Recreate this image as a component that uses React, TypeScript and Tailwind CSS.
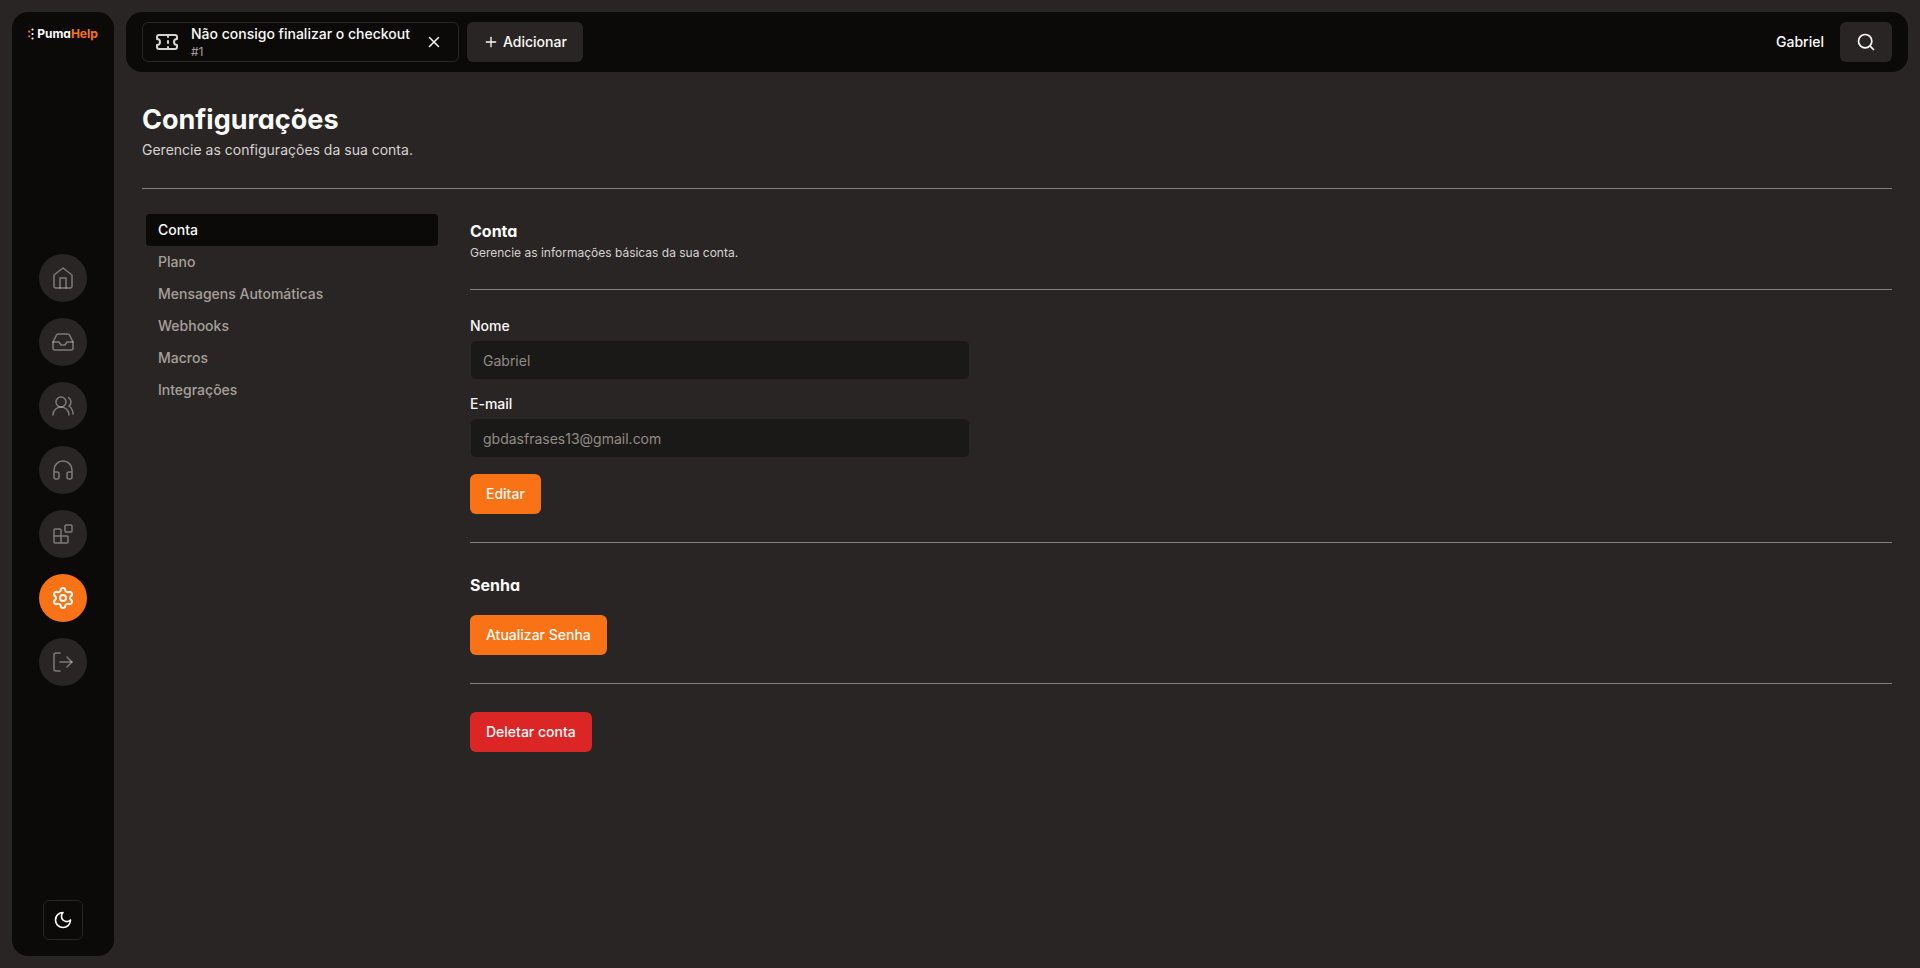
import React, { useState } from 'react';
import { Headphones, Inbox, LogOut, Plus, Search, Settings, Ticket, UsersRound, X } from 'lucide-react';

const HomeIcon = () => (
  <svg width="24" height="24" viewBox="0 0 24 24" fill="none" stroke="currentColor" strokeWidth="1.5" strokeLinecap="round" strokeLinejoin="round">
    <path d="m3 9 9-7 9 7v11a2 2 0 0 1-2 2H5a2 2 0 0 1-2-2z" />
    <polyline points="9 22 9 12 15 12 15 22" />
  </svg>
);

const BlocksIcon = () => (
  <svg width="24" height="24" viewBox="0 0 24 24" fill="none" stroke="currentColor" strokeWidth="1.5" strokeLinecap="round" strokeLinejoin="round">
    <rect width="7" height="7" x="14" y="3" rx="1" />
    <path d="M10 21V8a1 1 0 0 0-1-1H4a1 1 0 0 0-1 1v12a1 1 0 0 0 1 1h12a1 1 0 0 0 1-1v-5a1 1 0 0 0-1-1H3" />
  </svg>
);

const MoonIcon = () => (
  <svg width="20" height="20" viewBox="0 0 24 24" fill="none" stroke="currentColor" strokeWidth="2" strokeLinecap="round" strokeLinejoin="round">
    <path d="M12 3a6 6 0 0 0 9 9 9 9 0 1 1-9-9Z" />
  </svg>
);

const Logo = () => (
  <a href="#" className="flex h-3 items-center gap-[3px] text-[12px] leading-3 font-bold">
    <svg width="6" height="12" viewBox="0 0 6 12">
      <circle cx="4.5" cy="1.5" r="1.1" fill="#fafaf9" />
      <circle cx="1.2" cy="3.7" r="1.1" fill="#f97316" />
      <circle cx="4.5" cy="6" r="1.1" fill="#fafaf9" />
      <circle cx="1.2" cy="8.3" r="1.1" fill="#f97316" />
      <circle cx="4.5" cy="10.5" r="1.1" fill="#fafaf9" />
    </svg>
    <span className="[font-feature-settings:'cv11']">
      Puma<span className="text-[#f97316]">Help</span>
    </span>
  </a>
);

const menu = [
  { label: 'Início', icon: <HomeIcon /> },
  { label: 'Caixa de entrada', icon: <Inbox size={24} strokeWidth={1.5} /> },
  { label: 'Clientes', icon: <UsersRound size={24} strokeWidth={1.5} /> },
  { label: 'Atendimento', icon: <Headphones size={24} strokeWidth={1.5} /> },
  { label: 'Aplicativos', icon: <BlocksIcon /> },
  { label: 'Configurações', icon: <Settings size={24} strokeWidth={2} />, active: true },
  { label: 'Sair', icon: <LogOut size={24} strokeWidth={1.5} /> },
];

const tabs = ['Conta', 'Plano', 'Mensagens Automáticas', 'Webhooks', 'Macros', 'Integrações'];

const Sidebar = () => (
  <aside className="flex w-[102px] shrink-0 flex-col items-center justify-between rounded-2xl bg-stone-950 py-4">
    <Logo />
    <nav className="flex flex-col gap-4">
      {menu.map((item) => (
        <a
          key={item.label}
          href="#"
          aria-label={item.label}
          className={
            item.active
              ? 'flex size-12 items-center justify-center rounded-full bg-[#f97316] text-stone-50'
              : 'flex size-12 items-center justify-center rounded-full bg-stone-800 text-stone-50/40'
          }
        >
          {item.icon}
        </a>
      ))}
    </nav>
    <button type="button" aria-label="Tema" className="flex size-10 items-center justify-center rounded-md border border-stone-800">
      <MoonIcon />
    </button>
  </aside>
);

const Header = () => (
  <header className="flex h-15 items-center justify-between rounded-2xl bg-stone-950 px-4">
    <div className="flex items-center gap-2">
      <div className="flex h-10 items-center rounded-md border border-stone-800 pr-2 pl-3">
        <Ticket size={24} className="mr-3 text-stone-300" />
        <div className="mr-2">
          <p className="text-sm font-medium">Não consigo finalizar o checkout</p>
          <p className="text-xs text-stone-400">#1</p>
        </div>
        <button type="button" aria-label="Fechar" className="flex size-8 items-center justify-center">
          <X size={18} />
        </button>
      </div>
      <button type="button" className="flex h-10 items-center gap-1 rounded-md bg-stone-800 px-4 text-sm font-medium">
        <Plus size={16} />
        Adicionar
      </button>
    </div>
    <div className="flex items-center gap-4">
      <span className="text-sm font-medium">Gabriel</span>
      <button type="button" aria-label="Buscar" className="flex h-10 items-center rounded-md bg-stone-800 px-4">
        <Search size={20} />
      </button>
    </div>
  </header>
);

const Field = ({ id, label, type, value, onChange }: any) => (
  <div className="flex flex-col gap-1.5">
    <label htmlFor={id} className="text-sm leading-4 font-medium">
      {label}
    </label>
    <input
      id={id}
      type={type}
      value={value}
      onChange={(e) => onChange(e.target.value)}
      className="h-10 rounded-md border border-stone-800 bg-[#1b1917] px-3 text-sm text-[#918c88]"
    />
  </div>
);

const App = () => {
  const [tab, setTab] = useState('Conta');
  const [name, setName] = useState('Gabriel');
  const [email, setEmail] = useState('gbdasfrases13@gmail.com');

  return (
    <div className="flex min-h-screen gap-3 bg-stone-800 p-3 font-['Inter',sans-serif] text-stone-50">
      <Sidebar />
      <div className="flex min-w-0 flex-1 flex-col">
        <Header />
        <main className="px-4 pt-7">
          <h1 className="text-[27px] leading-10 font-bold [font-feature-settings:'cv11']">Configurações</h1>
          <p className="text-sm text-stone-300">Gerencie as configurações da sua conta.</p>
          <hr className="mt-7 border-[#85807d]" />

          <div className="flex gap-8 pt-[25px]">
            <nav className="flex w-[296px] shrink-0 flex-col pl-1">
              {tabs.map((item) => (
                <button
                  key={item}
                  type="button"
                  onClick={() => setTab(item)}
                  className={
                    item === tab
                      ? 'h-8 rounded bg-stone-950 px-3 text-left text-sm font-medium'
                      : 'h-8 rounded px-3 text-left text-sm font-medium text-stone-400'
                  }
                >
                  {item}
                </button>
              ))}
            </nav>

            <div className="min-w-0 flex-1 pt-[3px]">
              <h2 className="text-base leading-7 font-bold [font-feature-settings:'cv11']">Conta</h2>
              <p className="text-xs text-stone-300">Gerencie as informações básicas da sua conta.</p>
              <hr className="my-7 border-[#85807d]" />

              <form className="flex max-w-[500px] flex-col gap-4" onSubmit={(e) => e.preventDefault()}>
                <Field id="name" label="Nome" type="text" value={name} onChange={setName} />
                <Field id="email" label="E-mail" type="email" value={email} onChange={setEmail} />
                <button type="submit" className="h-10 self-start rounded-md bg-[#f97316] px-4 text-sm font-medium">
                  Editar
                </button>
              </form>
              <hr className="my-7 border-[#85807d]" />

              <h2 className="mb-4 text-base leading-7 font-bold [font-feature-settings:'cv11']">Senha</h2>
              <button type="button" className="h-10 rounded-md bg-[#f97316] px-4 text-sm font-medium">
                Atualizar Senha
              </button>
              <hr className="my-7 border-[#85807d]" />

              <button type="button" className="h-10 rounded-md bg-[#dc2626] px-4 text-sm font-medium">
                Deletar conta
              </button>
            </div>
          </div>
        </main>
      </div>
    </div>
  );
};

export default App;
